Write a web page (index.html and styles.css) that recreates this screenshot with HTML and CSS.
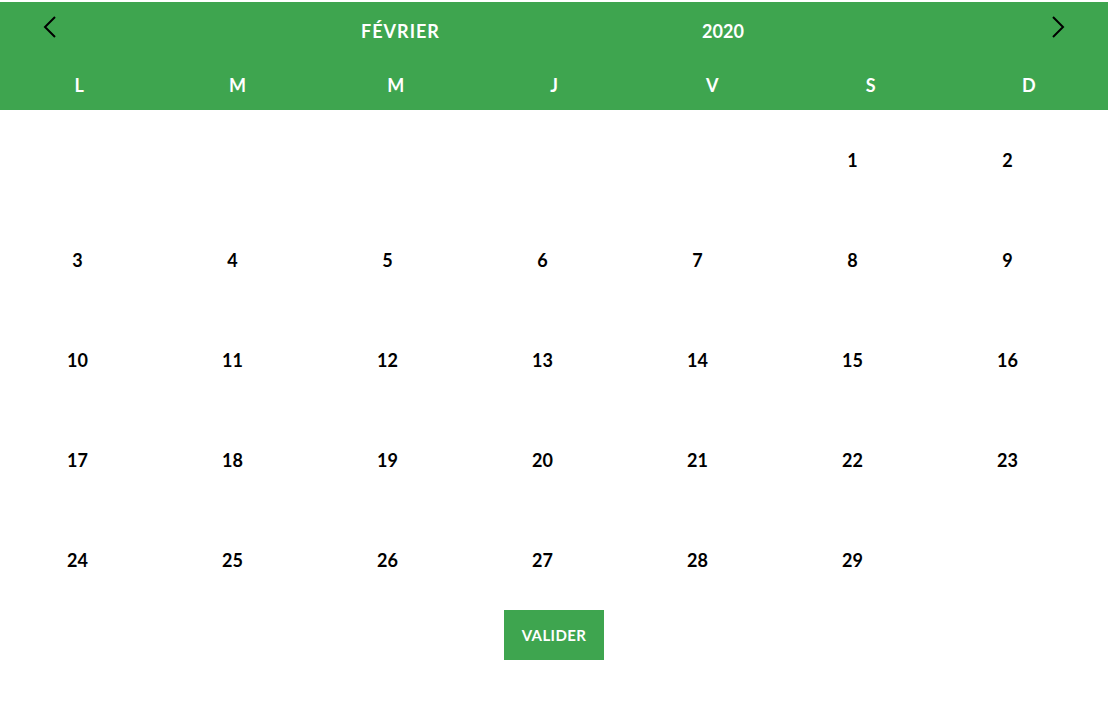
FILE: index.html
```html
<!DOCTYPE html>
<html lang="fr">
<head>
<meta charset="utf-8">
<title>Calendrier</title>
<link rel="stylesheet" href="styles.css">
</head>
<body>
<div class="picker">
  <div class="head">
    <div class="title-row">
      <button class="nav prev" aria-label="Mois précédent">
        <svg width="14" height="22" viewBox="0 0 14 22"><path d="M12 1 L2 11 L12 21" fill="none" stroke="#000" stroke-width="2"/></svg>
      </button>
      <div class="month">FÉVRIER</div>
      <div class="year">2020</div>
      <div class="spacer"></div>
      <button class="nav next" aria-label="Mois suivant">
        <svg width="14" height="22" viewBox="0 0 14 22"><path d="M2 1 L12 11 L2 21" fill="none" stroke="#000" stroke-width="2"/></svg>
      </button>
    </div>
    <div class="weekdays">
      <span>L</span><span>M</span><span>M</span><span>J</span><span>V</span><span>S</span><span>D</span>
    </div>
  </div>
  <div class="days">
    <span></span><span></span><span></span><span></span><span></span><span>1</span><span>2</span>
    <span>3</span><span>4</span><span>5</span><span>6</span><span>7</span><span>8</span><span>9</span>
    <span>10</span><span>11</span><span>12</span><span>13</span><span>14</span><span>15</span><span>16</span>
    <span>17</span><span>18</span><span>19</span><span>20</span><span>21</span><span>22</span><span>23</span>
    <span>24</span><span>25</span><span>26</span><span>27</span><span>28</span><span>29</span><span></span>
  </div>
  <div class="actions">
    <button class="validate">VALIDER</button>
  </div>
</div>
</body>
</html>
```
FILE: styles.css
```css
* { box-sizing: border-box; }
html, body { margin: 0; padding: 0; background: #fff; }
body { font-family: Lato, "Open Sans", sans-serif; font-weight: 700; }

.picker { width: 1108px; padding-top: 2px; }

.head { background: #3ea54f; color: #fff; height: 108px; }

.title-row { display: flex; align-items: center; height: 58px; }
.nav { width: 100px; height: 58px; background: none; border: 0; padding: 0; margin-top: -8px; display: flex; align-items: center; justify-content: center; cursor: pointer; }
.month { width: 600px; text-align: center; font-size: 18px; letter-spacing: 1px; padding-left: 1px; }
.year { width: 46px; text-align: center; font-size: 18px; }
.spacer { flex: 1; }

.weekdays { display: grid; grid-template-columns: repeat(7, 1fr); height: 50px; align-items: center; font-size: 18px; }
.weekdays span { text-align: center; }

.days { width: 1085px; display: grid; grid-template-columns: repeat(7, 155px); grid-auto-rows: 100px; align-items: center; font-size: 18px; color: #000; }
.days span { text-align: center; }

.actions { display: flex; justify-content: center; }
.validate { width: 100px; height: 50px; background: #3ea54f; color: #fff; border: 0; font-family: Lato, sans-serif; font-weight: 700; font-size: 15px; letter-spacing: 0.4px; padding: 0; }
```
